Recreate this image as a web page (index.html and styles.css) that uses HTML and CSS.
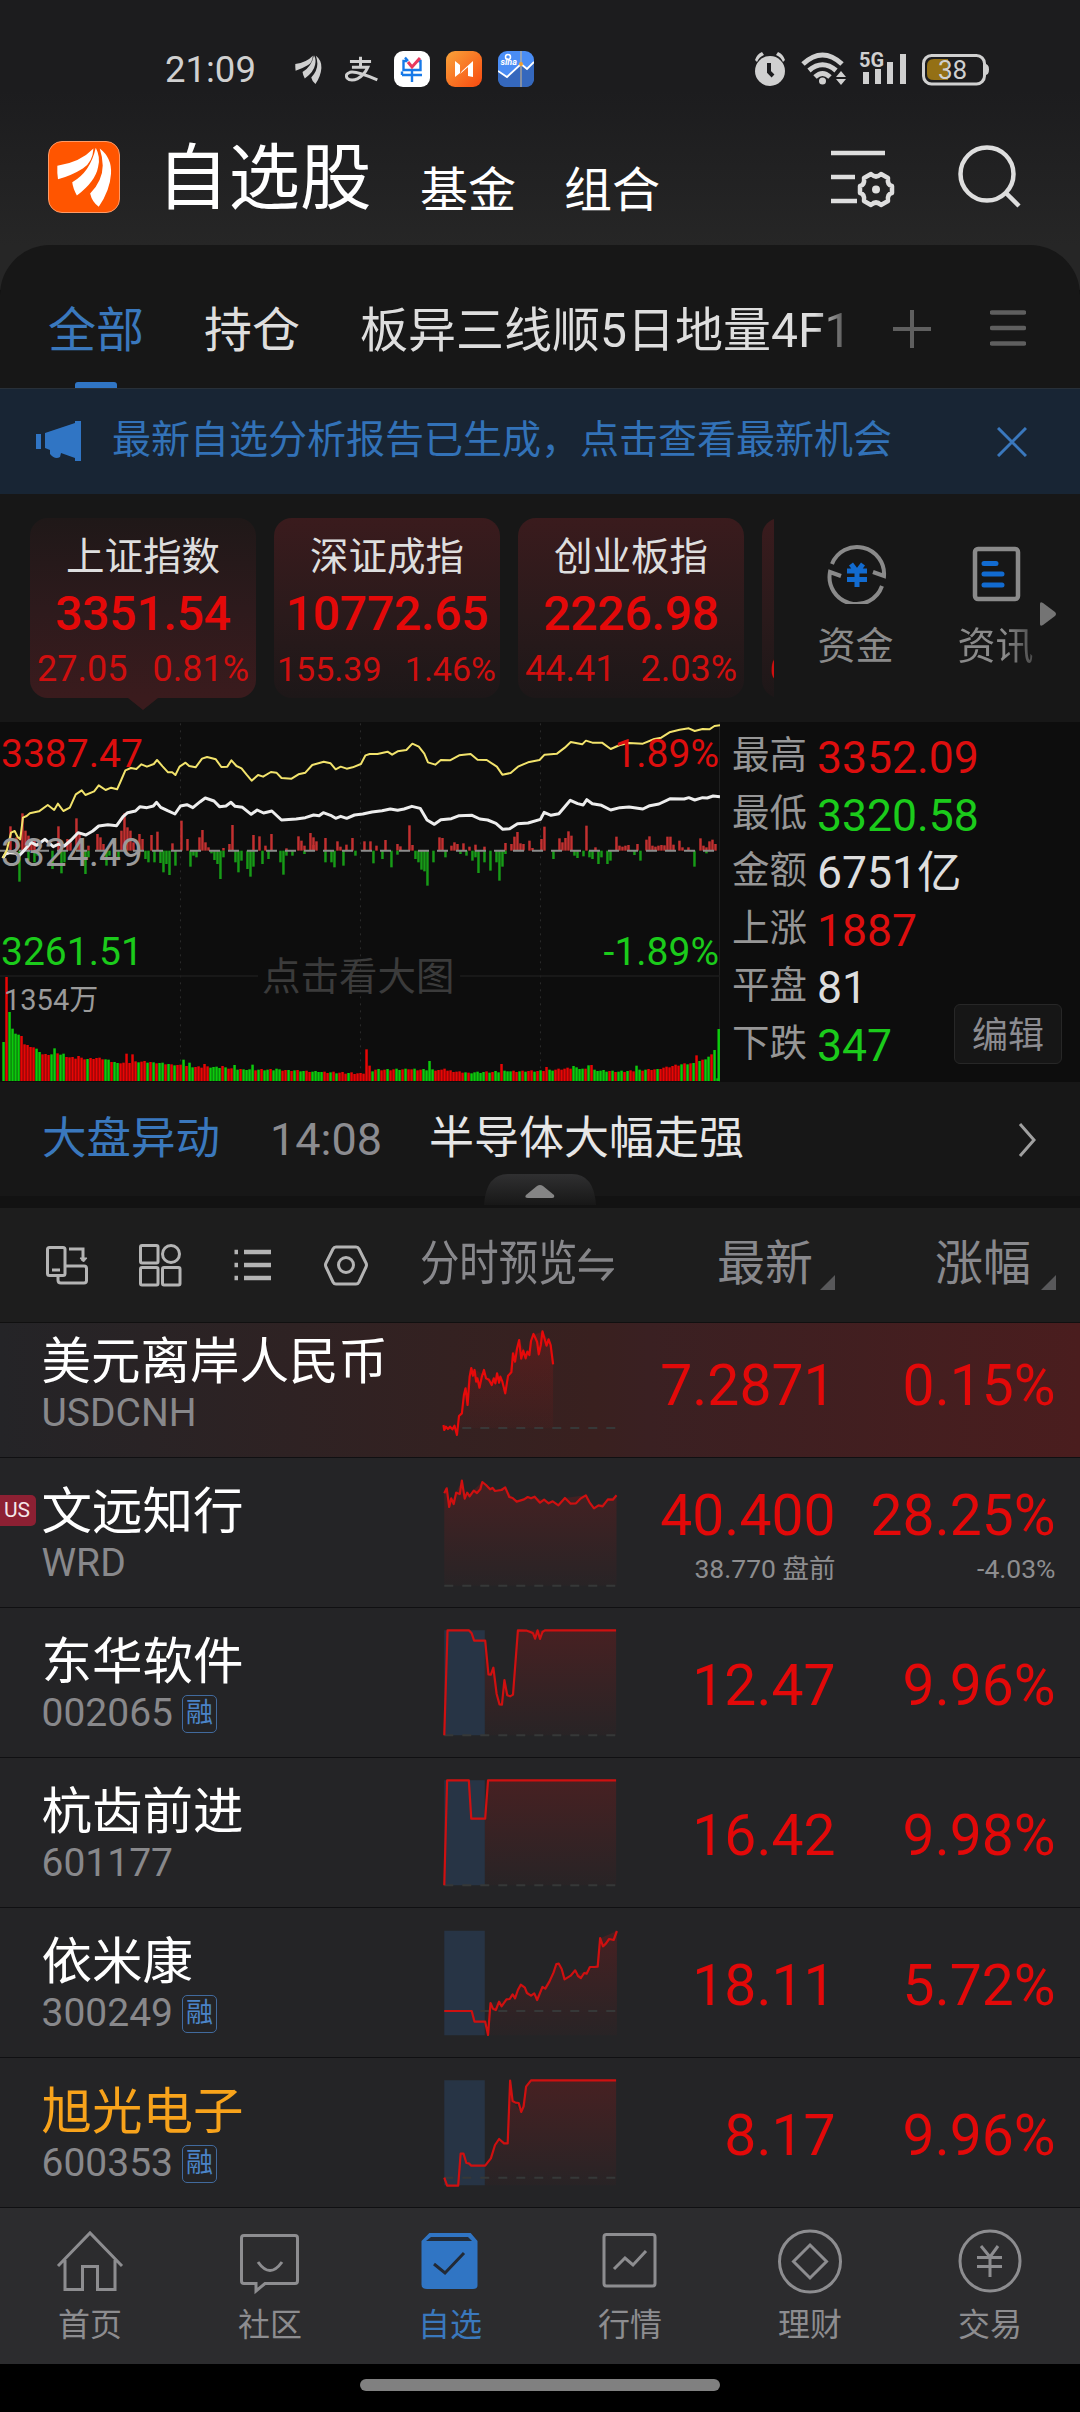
FILE: index.html
```html
<!DOCTYPE html>
<html lang="zh-CN">
<head>
<meta charset="utf-8">
<title>自选股</title>
<link rel="stylesheet" href="styles.css">
</head>
<body>
<svg class="defs" width="0" height="0">
  <defs>
    <linearGradient id="area" x1="0" y1="0" x2="0" y2="1"><stop offset="0" stop-color="#f01010" stop-opacity=".17"/><stop offset="1" stop-color="#f01010" stop-opacity=".02"/></linearGradient>
    <linearGradient id="orange" x1="0" y1="0" x2="1" y2="1"><stop offset="0" stop-color="#f9a33a"/><stop offset="1" stop-color="#f8490f"/></linearGradient>
    <linearGradient id="cap" x1="0" y1="0" x2="0" y2="1"><stop offset="0" stop-color="#303031"/><stop offset="1" stop-color="#171717"/></linearGradient>
    <symbol id="wing" viewBox="80 320 166 180"><path d="M81 376Q150 366 190 324Q188 366 158 384Q126 404 83 417Q80 398 81 376ZM126 426Q180 396 197 322Q212 350 204 380Q196 424 140 466Q128 444 126 426ZM209 324Q246 352 243 400Q240 450 206 500Q186 486 180 460Q218 420 218 375Q217 348 209 324Z" fill="currentColor"/></symbol>
  </defs>
</svg>
<div class="screen">
  <header class="top">
    <div class="status">
      <span class="clock">21:09</span>
      <svg class="st-wing"><use href="#wing"/></svg>
      <svg class="st-pay" viewBox="945 48 100 78" fill="none" stroke="#d0d0d0" stroke-width="9"><path d="M960 64H1024M992 50V82M966 82H1014Q1004 104 984 116Q962 126 951 114Q945 102 960 97Q978 92 1043 120"/></svg>
      <svg class="st-app" viewBox="0 0 36 36"><rect width="36" height="36" rx="9" fill="#fff"/><path d="M13 10H9.500v9h17v-9H23M8 24h20M8 20.500v3.500M11 6.500l3 3.500M18 19v12" fill="none" stroke="#1779e8" stroke-width="2.400"/><path d="M14 11l4 5 8-9" fill="none" stroke="#e8395e" stroke-width="3"/></svg>
      <svg class="st-app" viewBox="0 0 36 36"><rect width="36" height="36" rx="9" fill="url(#orange)"/><path d="M9 10l5 4v8l-5 4zM27 10v16l-5-1v-9l-8 7 2-3z" fill="#fff"/></svg>
      <svg class="st-app" viewBox="0 0 36 36"><rect width="36" height="36" rx="9" fill="#4a8df5"/><path d="M0 20l9 6 14-13 6 5 7-7v16q0 9-9 9H9q-9 0-9-9z" fill="#3568bd"/><path d="M0 20l9 6 14-13 6 5 7-7" fill="none" stroke="#fff" stroke-width="1.8"/><path d="M23 0v36" stroke="#d8b98a"/><circle cx="23" cy="13" r="2" fill="#f0a030"/><circle cx="10" cy="6" r="2.5" fill="none" stroke="#fff" stroke-width="1.5"/><text x="2.5" y="13.5" class="sina">sina</text></svg>
      <svg class="st-right" viewBox="750 48 242 42">
        <g fill="#d0d0d0"><circle cx="770" cy="71" r="15"/><path d="M755 60q2-6 7-8l2 3q-5 2-7 7zM785 60q-2-6-7-8l-2 3q5 2 7 7z"/><path d="M863 72h6v12h-6zM875 69h6v15h-6zM887 62h6v22h-6zM900 54h6v30h-6zM841 71l5 6h-10zM841 85l5-6h-10zM985 64q4 0 4 5.500t-4 5.500z"/><circle cx="822.500" cy="81" r="3.500"/></g>
        <path d="M769 63v9l4 4" fill="none" stroke="#1c1c1e" stroke-width="4"/>
        <g fill="none" stroke="#d0d0d0" stroke-width="5"><path d="M803 64Q822.500 46 842 64M809 70.500Q822.500 59 836 70.500M815 77Q822.500 70 830 77"/></g>
        <rect x="923.500" y="55.500" width="61" height="28.500" rx="8" fill="none" stroke="#d0d0d0" stroke-width="3"/>
        <path d="M948 59h-14q-7 0-7 7v8q0 6 7 6h14z" fill="#947015"/>
        <text x="859" y="67" class="g5">5G</text><text x="938" y="79" class="bat">38</text>
      </svg>
    </div>
    <div class="head">
      <div class="logo"><svg><use href="#wing"/></svg></div>
      <h1>自选股</h1>
      <span class="sec s1">基金</span><span class="sec s2">组合</span>
      <svg class="filter" viewBox="828 141 68 72" fill="none" stroke="#dedede" stroke-width="4.500"><path d="M831 153h54M831 177h24M831 201h26"/><path d="M871 174q5 5 10 0l7 4q-1 7 4 8v7q-5 1-4 8l-7 4q-5-5-10 0l-7-4q1-7-4-8v-7q5-1 4-8z" stroke-linejoin="round"/><circle cx="876" cy="189.500" r="2.500" fill="#dedede" stroke-width="3"/></svg>
      <svg class="search" viewBox="956 141 68 72" fill="none" stroke="#dedede" stroke-width="4.500"><circle cx="987" cy="174" r="26.500"/><path d="M1006 193l13 13"/></svg>
    </div>
  </header>
  <main>
    <nav class="tabs">
      <span class="tab on">全部</span><span class="tab">持仓</span><span class="tab long">板异三线顺5日地量4F1</span>
      <svg class="plus" viewBox="0 0 38 38"><path d="M19 0v38M0 19h38" stroke="#5f5f5f" stroke-width="4"/></svg>
      <svg class="burger" viewBox="0 0 36 36"><path d="M2 2.500h32M2 18h32M2 33.500h32" stroke="#5f5f5f" stroke-width="4.500" stroke-linecap="round"/></svg>
    </nav>
    <div class="notice">
      <svg class="horn" viewBox="36 421 46 42" fill="#3075c4"><path d="M36 434h5v15h-5zM45 433l30-10v-2h6v40h-6v-3l-14-5-1 4q-5 3-10-3v-4l-5-2z"/></svg>
      <span>最新自选分析报告已生成，点击查看最新机会</span>
      <svg class="close" viewBox="0 0 30 30"><path d="M1 1l28 28M29 1L1 29" stroke="#3a78bd" stroke-width="3"/></svg>
    </div>
    <section class="indices">
      <div class="cards">
        <div class="card sel"><b>上证指数</b><strong>3351.54</strong><p><i>27.05</i><i>0.81%</i></p></div>
        <div class="card"><b>深证成指</b><strong>10772.65</strong><p class="sm"><i>155.39</i><i>1.46%</i></p></div>
        <div class="card"><b>创业板指</b><strong>2226.98</strong><p><i>44.41</i><i>2.03%</i></p></div>
        <div class="card"><b></b><strong></strong><p><i>6</i></p></div>
      </div>
      <div class="tool t1"><svg viewBox="0 0 60 60" fill="none"><path d="M5 20A27 27 0 0 1 57 32L46 28M55 42A27 27 0 0 1 3 28L14 32" stroke="#8a8a8a" stroke-width="4"/><path d="M24 20l6 8 6-8M20 27h20M20 35.500h20M30 28v15" stroke="#126bd0" stroke-width="5"/></svg><span>资金</span></div>
      <div class="tool t2"><svg viewBox="0 0 60 60" fill="none"><rect x="8" y="5" width="43" height="50" rx="3" stroke="#8a8a8a" stroke-width="4.500"/><path d="M17 19.500h12M17 30h18M17 41h18" stroke="#126bd0" stroke-width="5" stroke-linecap="round"/></svg><span>资讯</span></div>
      <svg class="more" viewBox="0 0 16 24"><path d="M0 2q0-3 3-1l12 9q2 2 0 4L3 23q-3 2-3-1z" fill="#747474"/></svg>
    </section>
    <section class="market">
      <div class="chart">
        <svg id="plot" viewBox="0 36 1568 1080" preserveAspectRatio="none">
          <path d="M393 40V1113M785 40V1113M1177 40V1113" stroke="#2b2b2b" stroke-width="1" stroke-dasharray="2 5" vector-effect="non-scaling-stroke"/>
          <path d="M0 798H562M1002 798H1568" stroke="#1d1d1d" stroke-width="4"/>
          <g id="ticks"></g><g id="volume"></g>
          <path d="M0 422H1560" stroke="#8c8c8c" stroke-width="2" stroke-dasharray="11 8" vector-effect="non-scaling-stroke"/>
          <polyline class="line-white" points="6,445 12,432 22,428 35,430 41,438 50,425 68,397 80,406 98,388 116,410 128,402 140,408 155,390 170,368 187,375 202,363 215,348 235,344 254,347 268,320 278,308 295,303 305,290 320,293 334,288 341,277 350,292 365,302 381,312 393,288 407,284 420,293 436,275 447,264 466,273 478,290 492,288 503,277 512,289 528,292 547,313 560,300 574,309 592,303 613,330 645,327 665,323 683,315 695,317 704,308 720,316 731,325 742,319 755,325 772,315 790,312 810,306 832,302 850,297 866,301 880,297 897,289 915,295 930,330 946,343 960,329 983,326 1000,317 1028,316 1045,327 1062,330 1080,340 1095,358 1110,356 1127,341 1150,339 1177,328 1185,307 1200,316 1217,311 1230,290 1242,271 1258,281 1270,285 1278,269 1290,281 1310,286 1330,300 1350,293 1370,291 1400,297 1415,287 1435,282 1460,266 1490,267 1500,263 1513,270 1530,263 1540,264 1553,258 1568,260"/>
          <polyline class="line-yellow" points="6,444 15,420 24,368 32,363 38,380 44,388 50,323 58,318 65,310 85,304 104,285 118,300 126,281 138,303 152,293 165,253 178,241 186,255 205,244 215,226 230,240 242,233 255,238 264,210 273,181 285,174 297,177 308,163 320,170 335,162 342,150 354,169 366,187 375,187 382,195 391,170 404,158 412,168 426,172 440,146 451,141 470,148 482,171 495,170 504,151 515,168 526,175 537,194 548,212 562,195 573,200 590,186 602,188 613,204 635,206 650,193 665,188 680,165 705,155 720,160 731,178 742,170 755,176 768,172 786,162 796,136 805,132 822,132 844,125 854,134 866,124 885,120 898,101 912,110 924,131 932,157 948,164 960,150 980,151 1000,136 1025,132 1040,149 1060,150 1082,170 1094,194 1112,189 1128,170 1150,157 1175,150 1186,134 1213,131 1230,113 1243,96 1268,103 1276,92 1290,98 1311,98 1330,117 1350,105 1370,99 1400,101 1425,87 1440,83 1458,67 1480,59 1500,55 1513,63 1530,57 1545,58 1556,48 1568,46"/>
        </svg>
        <span class="lb up l1">3387.47</span><span class="lb up r1">1.89%</span>
        <span class="lb l2">3324.49</span>
        <span class="lb down l3">3261.51</span><span class="lb down r3">-1.89%</span>
        <span class="lb l4">1354万</span><span class="lb hint">点击看大图</span>
      </div>
      <dl class="stats">
        <dt>最高</dt><dd class="up">3352.09</dd>
        <dt>最低</dt><dd class="down">3320.58</dd>
        <dt>金额</dt><dd>6751亿</dd>
        <dt>上涨</dt><dd class="up">1887</dd>
        <dt>平盘</dt><dd>81</dd>
        <dt>下跌</dt><dd class="down">347</dd>
      </dl>
      <span class="edit">编辑</span>
    </section>
    <div class="news">
      <span class="kind">大盘异动</span><time>14:08</time><span class="title">半导体大幅走强</span>
      <svg class="chev" viewBox="0 0 18 34"><path d="M2 1l14 16L2 33" fill="none" stroke="#a0a0a0" stroke-width="3"/></svg>
      <svg class="handle" viewBox="484 1174 112 31"><path d="M484 1205Q486 1174 508 1174H572Q594 1174 596 1205Z" fill="url(#cap)"/><path d="M526 1195l11-9q3-2 6 0l11 9q1 3-2 3h-24q-4 0-2-3z" fill="#858585"/></svg>
    </div>
    <div class="cols">
      <svg class="tools" viewBox="40 1240 340 50" fill="none" stroke="#b4b4b4" stroke-width="3">
        <rect x="47.500" y="1247.500" width="17.500" height="28" rx="2"/><path d="M52 1270h8M69 1249h14v12M66 1266h18q2.500 0 2.500 2.500v12q0 2.500-2.500 2.500h-23q-3 0-3-3v-4"/><path d="M80 1258h7l-3.500 4z" fill="#b4b4b4" stroke-width="1"/>
        <rect x="140.500" y="1245.500" width="17.500" height="17.500" rx="1.500"/><circle cx="171" cy="1254" r="8.500"/><rect x="140.500" y="1267.500" width="17.500" height="17.500" rx="1.500"/><rect x="162.500" y="1267.500" width="17.500" height="17.500" rx="1.500"/>
        <path d="M244 1252h27M244 1265h27M244 1278h27M234.500 1252h3.500M234.500 1265h3.500M234.500 1278h3.500" stroke-width="4.500"/>
        <path d="M336 1247h20q2 0 3 2l7 14q1 2 0 4l-7 15q-1 2-3 2h-20q-2 0-3-2l-7-15q-1-2 0-4l7-14q1-2 3-2z"/><circle cx="346" cy="1265" r="7.500"/>
      </svg>
      <span class="preview">分时预览</span>
      <svg class="swap" viewBox="0 0 36 34" fill="none" stroke="#858588" stroke-width="3.500"><path d="M12 1L3 12H35M1 22H33L24 32"/></svg>
      <span class="c-last">最新</span><i class="tri"></i><span class="c-chg">涨幅</span><i class="tri"></i>
    </div>
    <section class="list">
      <article class="row first">
        <div class="name"><b>美元离岸人民币</b><small>USDCNH</small></div>
        <svg class="spark" viewBox="1080 -9 440 450" preserveAspectRatio="none"><path class="dash" d="M1088 354H1508"/><path class="area" d="M1090 354L1120 372L1140 240L1156 175L1200 205L1238 245L1256 130L1272 95L1290 135L1306 75L1328 65L1348 100L1354 163V354Z"/><polyline points="1086,345 1088,360 1092,350 1097,357 1102,350 1108,358 1113,347 1119,375 1124,318 1131,310 1136,255 1140,235 1145,285 1150,200 1154,174 1158,197 1162,180 1166,215 1169,205 1174,233 1180,199 1185,180 1190,205 1197,209 1204,225 1209,205 1213,220 1217,190 1222,218 1225,200 1230,215 1237,250 1244,197 1252,187 1256,130 1261,155 1266,115 1271,90 1276,146 1281,122 1287,145 1291,125 1296,135 1300,93 1306,72 1311,85 1315,96 1319,133 1324,105 1328,64 1334,90 1338,107 1343,88 1348,105 1354,163"/></svg>
        <div class="num last"><span>7.2871</span></div><div class="num chg"><span>0.15%</span></div>
      </article>
      <article class="row">
        <em class="us">US</em>
        <div class="name"><b>文远知行</b><small>WRD</small></div>
        <svg class="spark" viewBox="1080 441 440 450" preserveAspectRatio="none"><path class="area" d="M1088 550L1094 535L1100 590L1131 512L1138 565L1181 516L1210 542L1236 532L1262 574L1305 560L1366 585L1384 564L1434 556L1454 595L1509 556V827H1088Z"/><path class="dash" d="M1088 827H1508"/><polyline points="1088,550 1094,535 1100,591 1105,565 1111,582 1117,548 1126,552 1131,512 1138,566 1144,548 1150,559 1160,542 1168,549 1176,538 1181,516 1190,525 1200,538 1206,534 1212,543 1228,540 1237,532 1247,561 1255,564 1265,575 1283,568 1292,561 1300,565 1309,560 1322,578 1332,569 1343,580 1353,574 1367,586 1383,564 1397,581 1410,580 1422,565 1434,556 1443,577 1454,595 1465,586 1475,589 1488,568 1500,569 1509,556"/></svg>
        <div class="num last"><span>40.400</span><small>38.770 盘前</small></div><div class="num chg"><span>28.25%</span><small>-4.03%</small></div>
      </article>
      <article class="row">
        <div class="name"><b>东华软件</b><small>002065<u>融</u></small></div>
        <svg class="spark" viewBox="1080 891 440 450" preserveAspectRatio="none"><path class="area" d="M1187 992L1196 1094L1208 1075L1222 1184L1228 1184L1236 1110L1246 1158L1256 1155L1268 961H1508V1276H1187Z"/><path class="pre" d="M1088 961H1187V1276H1088Z"/><path class="dash" d="M1088 1276H1508"/><polyline points="1088,1276 1096,961 1148,961 1155,970 1161,992 1188,992 1196,1093 1202,1094 1208,1073 1216,1152 1223,1183 1229,1184 1235,1110 1242,1156 1249,1159 1256,1154 1268,961 1290,962 1300,967 1305,970 1310,986 1316,961 1322,987 1328,966 1334,961 1508,961"/></svg>
        <div class="num last"><span>12.47</span></div><div class="num chg"><span>9.96%</span></div>
      </article>
      <article class="row">
        <div class="name"><b>杭齿前进</b><small>601177</small></div>
        <svg class="spark" viewBox="1080 51 440 450" preserveAspectRatio="none"><path class="area" d="M1187 236L1194 121H1508V436H1187Z"/><path class="pre" d="M1088 121H1187V436H1088Z"/><path class="dash" d="M1088 436H1508"/><polyline points="1088,436 1095,121 1148,121 1154,236 1188,236 1195,121 1508,121"/></svg>
        <div class="num last"><span>16.42</span></div><div class="num chg"><span>9.98%</span></div>
      </article>
      <article class="row">
        <div class="name"><b>依米康</b><small>300249<u>融</u></small></div>
        <svg class="spark" viewBox="1080 501 440 450" preserveAspectRatio="none"><path class="area" d="M1187 850L1201 790L1260 775L1275 735L1315 780L1366 671L1382 718L1462 680L1470 595L1510 573V886H1187Z"/><path class="pre" d="M1088 572H1187V886H1088Z"/><path class="dash" d="M1088 813H1508"/><polyline points="1088,813 1155,813 1162,845 1188,845 1195,885 1201,789 1207,806 1214,810 1222,785 1228,799 1240,778 1248,777 1255,763 1261,775 1268,750 1275,734 1285,743 1290,759 1300,767 1308,760 1315,780 1328,741 1335,746 1345,725 1355,698 1362,672 1368,671 1375,687 1382,718 1397,707 1408,691 1415,708 1422,714 1430,699 1436,701 1444,681 1455,681 1463,680 1469,594 1476,619 1483,611 1491,597 1502,600 1510,573"/></svg>
        <div class="num last"><span>18.11</span></div><div class="num chg"><span>5.72%</span></div>
      </article>
      <article class="row hot">
        <div class="name"><b>旭光电子</b><small>600353<u>融</u></small></div>
        <svg class="spark" viewBox="1080 951 440 450" preserveAspectRatio="none"><path class="area" d="M1187 1276L1222 1198L1243 1210L1249 1022L1256 1086L1275 1115L1288 1040L1300 1021H1508V1336H1187Z"/><path class="pre" d="M1088 1021H1187V1336H1088Z"/><path class="dash" d="M1088 1313H1508"/><polyline points="1088,1313 1095,1337 1122,1337 1128,1241 1135,1241 1142,1269 1148,1270 1154,1277 1188,1277 1202,1255 1212,1215 1222,1197 1234,1210 1243,1210 1249,1022 1255,1083 1262,1088 1270,1089 1276,1116 1282,1099 1288,1040 1300,1021 1508,1021"/></svg>
        <div class="num last"><span>8.17</span></div><div class="num chg"><span>9.96%</span></div>
      </article>
    </section>
  </main>
  <footer class="bar">
    <a><svg viewBox="54 2225 72 72"><path d="M58 2266l32-33 32 33M65 2260v29.500h17.500v-23h15v23H115V2260"/></svg>首页</a>
    <a><svg viewBox="234 2225 72 72"><path d="M244 2235.500h51q2.500 0 2.500 2.500v43q0 2.500-2.500 2.500h-30l-9 7.500v-7.500h-12q-2.500 0-2.500-2.500v-43q0-2.500 2.500-2.500zM258 2262q12 17 24 0"/></svg>社区</a>
    <a class="on"><svg viewBox="414 2225 72 72"><path d="M430 2234.500h40l6 7v44q0 2-3 2h-46q-4 0-4-3v-43z" fill="#3075c4" stroke="#3075c4"/><path d="M431 2237h37l4 4h-46z" class="lid"/><path d="M434 2264l11 9 19-20" stroke="#222a36"/></svg>自选</a>
    <a><svg viewBox="594 2225 72 72"><rect x="604" y="2234.500" width="51" height="51.500" rx="2.500"/><path d="M614 2269l11-11 8 7 13-14"/></svg>行情</a>
    <a><svg viewBox="774 2225 72 72"><circle cx="810" cy="2261.500" r="30.500"/><path d="M810 2245l16.500 16.500-16.500 16.500-16.500-16.500z"/></svg>理财</a>
    <a><svg viewBox="954 2225 72 72"><circle cx="990" cy="2261" r="30"/><path d="M981 2246l9 11 8-11M977 2257.500h25M977 2266.500h25M990 2257v20"/></svg>交易</a>
  </footer>
  <div class="home"><i></i></div>
</div>
<script src="chart.js"></script>
</body>
</html>
```
FILE: chart.js
```js
// One bar per trading minute: 240 bars across a 1568-unit plot.
const PITCH = 1568 / 240;
const AXIS = 422;
const FLOOR = 1113;

const buys = "20:73 35:40 47:112 53:60 60:45 66:30 72:35 125:73 131:30 145:35 150:25 165:97 171:55 190:15 210:50 216:40 222:20 262:60 269:112 275:70 282:60 288:25 301:50 307:35 327:47 340:57 372:22 391:90 404:35 430:40 437:62 443:25 450:10 488:8 495:20 502:77 553:47 560:43 573:15 587:50 619:7 645:43 652:30 658:15 672:53 678:40 684:17 690:28 704:38 736:28 742:12 755:18 768:38 795:28 808:28 821:15 840:32 866:20 872:13 892:76 898:17 957:40 963:38 983:15 990:25 996:20 1010:22 1022:12 1036:18 1050:12 1100:23 1112:20 1119:42 1126:56 1132:22 1138:20 1152:30 1160:8 1178:35 1185:72 1217:37 1223:25 1230:38 1237:58 1243:45 1275:75 1295:10 1340:42 1347:15 1353:12 1360:15 1366:17 1385:20 1405:33 1411:43 1418:15 1425:12 1431:15 1437:17 1444:16 1450:42 1457:42 1463:18 1476:30 1482:10 1496:10 1522:37 1528:15 1535:10 1541:28 1548:33 1554:20";
const sells = "41:93 60:30 73:35 79:15 112:55 131:68 138:35 184:70 190:20 229:45 235:15 255:20 314:25 320:35 333:35 346:37 352:65 359:40 366:73 379:45 411:48 418:15 425:20 456:8 463:28 470:40 476:85 482:20 508:35 515:65 521:30 534:55 541:78 547:48 567:40 580:25 606:35 613:72 619:15 632:15 658:10 710:35 723:35 729:50 749:45 775:15 814:38 834:25 853:50 866:12 905:25 912:35 918:57 924:62 931:105 944:35 970:20 1003:10 1016:15 1029:30 1035:20 1041:67 1055:35 1068:60 1081:35 1087:90 1093:48 1100:10 1204:25 1249:15 1256:22 1269:17 1282:20 1288:25 1301:40 1308:20 1321:40 1328:30 1379:13 1392:30 1509:48 1535:8";

// Volume trend as [minute, height]; peaks override single minutes.
const trend = [[0,117],[3,157],[6,135],[8,108],[11,97],[13,80],[15,78],[18,83],[21,72],[28,66],[32,70],[38,54],[46,58],[50,56],[56,50],[64,42],[70,42],[80,35],[95,33],[105,27],[115,24],[120,22],[124,34],[135,35],[145,33],[155,25],[168,29],[180,30],[190,40],[196,33],[205,28],[218,36],[226,50],[230,54],[234,65],[236,80],[238,8],[239,156]];
const peaks = {1:312, 2:207, 4:142, 5:139, 7:110, 17:98, 20:82, 25:75, 41:82, 43:80, 60:64, 62:55, 67:51, 73:45, 77:48, 83:49, 91:37, 121:95, 122:46, 142:60, 147:37, 166:51, 181:42, 190:45, 195:47, 196:48, 211:46, 231:77, 237:93};
const colors = "grggggrrrrrggrrrggrggrrrrrrrgrrrrrggrggrrrrrrgrrgrgrggrgrgrrgrggrrrrrggggrgrrggrggggrgrggrgggrrgrgrggrrggggrrgrgrrrgrrrrrrrgrgrrgrrggrgrrgrrggggrrrrrrrrrrgrgggggrgrggrgggrrgrgrrgrgrrggrrrrrrggggrgrgggggrgrggrgrrggrgrrrgrrrrrrrgrgrgrgrggrggrrrg";

function bar(x, y, h, cls) {
  return `<rect x="${x.toFixed(1)}" y="${y}" width="5.4" height="${h}" class="${cls}"/>`;
}
function ticks(src, cls, up) {
  return src.split(" ").map(p => {
    const [x, h] = p.split(":").map(Number);
    return bar(Math.floor(x / PITCH + 0.3) * PITCH + 0.5, up ? AXIS - h : AXIS, h, cls);
  }).join("");
}
function volumeAt(i) {
  if (peaks[i]) return peaks[i];
  const k = trend.findIndex(p => p[0] >= i);
  if (trend[k][0] === i) return trend[k][1];
  const [a, va] = trend[k - 1], [b, vb] = trend[k];
  return Math.round(va + (vb - va) * (i - a) / (b - a)) + (i * 7 % 3 - 1) * 2;
}

document.getElementById("ticks").innerHTML = ticks(buys, "buy", true) + ticks(sells, "sell", false);
let out = "";
for (let i = 0; i < 240; i++) {
  const h = volumeAt(i);
  out += bar(i * PITCH + (i === 239 ? 1 : 5), FLOOR - h, h, colors[i] === "g" || i === 239 ? "vg" : "vr");
}
document.getElementById("volume").innerHTML = out;
```
FILE: styles.css
```css
* { box-sizing: border-box; margin: 0; padding: 0; }
body { width: 1080px; height: 2412px; overflow: hidden; background: #000; font-family: Roboto, "Noto Sans CJK SC", sans-serif; color: #dedede; }
i, em { font-style: normal; }
u { text-decoration: none; }
b, h1, strong { font-weight: 400; }
svg { display: block; flex: none; }
.defs { position: absolute; }
.screen { display: flex; flex-direction: column; height: 2412px; white-space: nowrap; }
.up { color: #dd0e0e; }
.down { color: #1bcb1b; }

.top { height: 290px; margin-bottom: -45px; background: linear-gradient(#1c1c1e 0, #1c1c1e 90px, #262626 245px); }
.status { height: 95px; padding: 43px 88px 0 165px; display: flex; align-items: center; }
.clock { width: 130px; padding-top: 1px; font-size: 36.500px; line-height: 52px; color: #d0d0d0; }
.st-wing { width: 27px; height: 29px; color: #d0d0d0; }
.st-pay { width: 33px; height: 26px; margin: 0 16px 0 23px; }
.st-app { width: 36px; height: 36px; margin-right: 16px; }
.st-right { width: 242px; height: 42px; margin-left: auto; }
.sina { font: italic 700 9px Roboto, sans-serif; fill: #fff; }
.g5 { font: 700 20px "Roboto", sans-serif; fill: #d0d0d0; }
.bat { font: 400 26px Roboto, sans-serif; fill: #d0d0d0; }
.head { height: 150px; padding: 14px 56px 0 48px; display: flex; align-items: center; }
.logo { width: 72px; height: 72px; border-radius: 14px; border: 1px solid #ff9a66; background: #ff5500; padding: 5px 0 0 8px; color: #fff; }
.logo svg { width: 55px; height: 60px; }
h1 { margin-left: 37px; padding-top: 3px; font-size: 71.500px; line-height: 100px; color: #fff; }
.sec { font-size: 48px; line-height: 60px; padding-top: 27px; color: #fff; }
.s1 { margin-left: 48.500px; }
.s2 { margin-left: 48px; }
.filter, .search { width: 68px; height: 72px; }
.filter { margin-left: auto; }
.search { margin-left: 60px; }

main { background: #171717; border-radius: 50px 50px 0 0; height: 1962px; }
.tabs { height: 143px; padding: 26px 54px 0 48px; display: flex; align-items: flex-start; }
.tab { font-size: 48px; height: 117px; line-height: 119px; position: relative; margin-right: 60px; }
.tab.on { color: #3a78bd; }
.tab.on::after { content: ""; position: absolute; left: 27px; bottom: 0; width: 42px; height: 6px; border-radius: 3px 3px 0 0; background: #3075c4; }
.tab.long { width: 488px; margin: 0 46px 0 0; overflow: hidden; mask-image: linear-gradient(90deg, #000 455px, rgba(0,0,0,.25) 487px); }
.plus { width: 38px; height: 38px; margin: 39px 59px 0 -1px; }
.burger { width: 36px; height: 36px; margin-top: 39px; }
.notice { height: 106px; padding: 0 53px 0 36px; display: flex; align-items: center; background: #182534; border-top: 1px solid #283039; color: #3272b8; font-size: 39px; }
.notice span { line-height: 60px; margin-bottom: 3px; }
.horn { width: 46px; height: 42px; margin-right: 30px; }
.close { width: 30px; height: 30px; margin-left: auto; }

.indices { height: 228px; padding: 24px 24px 0 30px; display: flex; }
.cards { width: 744px; height: 195px; display: flex; gap: 18px; overflow: hidden; }
.card { position: relative; flex: none; width: 226px; height: 180px; border-radius: 18px; padding-top: 12px; background: linear-gradient(#3a1b1d, #2a1a1b 55%, #1d1718); display: flex; flex-direction: column; align-items: center; }
.card.sel { background: linear-gradient(#1f1818, #2d1a1c 50%, #3a1b1d); }
.card.sel::after { content: ""; position: absolute; left: 98px; top: 180px; border: 15px solid transparent; border-top: 12px solid #3a1b1d; border-bottom: 0; }
.card b { height: 54px; font-size: 38.500px; line-height: 54px; }
.card strong { height: 58px; font-size: 48px; line-height: 60px; font-weight: 500; letter-spacing: -.2px; color: #e40909; }
.card p { width: 100%; height: 52px; padding: 0 7px; display: flex; justify-content: space-between; font-size: 36px; line-height: 54px; color: #cf0f0f; }
.card p.sm { font-size: 34px; padding: 0 4px 0 3px; }
.tool { width: 78px; padding-top: 26px; color: #8a8a8a; font-size: 38px; line-height: 50px; }
.tool svg { width: 60px; height: 60px; margin: 0 auto 17px; }
.t1 { margin-left: 43.500px; }
.t2 { margin-left: 62px; }
.t2 span { display: block; mask-image: linear-gradient(90deg, #000 60%, rgba(0,0,0,.4)); }
.more { width: 16px; height: 24px; margin: 84px 0 0 4.500px; }

.market { position: relative; height: 360px; display: flex; background: #0d0d0d; }
.chart { position: relative; width: 720px; height: 360px; border-right: 1px solid #1f1f1f; }
#plot { width: 720px; height: 360px; }
#plot polyline { fill: none; vector-effect: non-scaling-stroke; stroke-linejoin: round; }
.line-white { stroke: #ededed; stroke-width: 3; }
.line-yellow { stroke: #f2e36c; stroke-width: 2; }
.buy { fill: #c23030; }
.sell { fill: #179b17; }
.vr { fill: #e80505; }
.vg { fill: #0cca0c; }
.lb { position: absolute; font-size: 39px; line-height: 44px; }
.l1 { left: 1px; top: 10px; }
.r1 { right: 0; top: 10px; }
.l2 { left: 1px; top: 109px; color: #9a9a9a; }
.l3 { left: 1px; top: 208px; }
.r3 { right: 0; top: 208px; }
.l4 { left: 4px; top: 256px; font-size: 29px; color: #9a9a9a; }
.hint { left: 262px; top: 233px; font-size: 38.500px; color: #3b3b3b; }
.stats { padding: 6px 0 0 12px; display: grid; grid-template-columns: 85px auto; grid-auto-rows: 57.600px; }
.stats dt { font-size: 37.500px; line-height: 55px; color: #969696; }
.stats dd { font-size: 44.500px; line-height: 61px; }
.edit { position: absolute; left: 954px; top: 282px; width: 108px; height: 60px; border: 1px solid #272727; border-radius: 6px; background: #161616; text-align: center; font-size: 36px; line-height: 62px; color: #8b8b90; }

.news { position: relative; height: 126px; padding: 12px 44px 10px 42px; display: flex; align-items: center; border-bottom: 12px solid #121212; font-size: 45px; line-height: 60px; }
.kind { width: 228px; margin-bottom: 3px; font-size: 44.500px; color: #3a78bd; }
.news time { width: 159px; color: #8c8c90; }
.title { margin-bottom: 3px; color: #e6e6e6; }
.chev { width: 18px; height: 34px; margin-left: auto; }
.handle { position: absolute; left: 484px; top: 92px; width: 112px; height: 31px; }
.cols { height: 114px; padding: 0 24px 0 40px; display: flex; align-items: center; background: #1d1d1d; color: #88888c; font-size: 48px; line-height: 60px; }
.cols span { margin-bottom: 3px; }
.tools { width: 340px; height: 50px; }
.preview { width: 156px; margin-left: 40px; transform: scaleX(.82); transform-origin: 0 50%; }
.swap { width: 36px; height: 34px; margin-left: 2px; }
.c-last { margin-left: 103px; }
.c-chg { margin-left: 100px; }
.tri { border-left: 15px solid transparent; border-bottom: 15px solid #58585a; margin: 34px 0 0 7px; }
.tri:last-child { margin-left: 10px; }

.list { height: 885px; overflow: hidden; background: #242426; border-top: 1px solid #101010; }
.row { position: relative; height: 150px; border-top: 1px solid #101012; display: flex; }
.first { margin-top: -16px; background: linear-gradient(90deg, #242427, #39201f 55%, #3a2022 60%, #4a1d1e); }
.name { width: 399px; margin-left: 41.500px; padding-top: 24px; }
.name b { display: block; font-size: 50.500px; line-height: 60px; color: #fff; }
.first .name b { font-size: 49.500px; }
.hot .name b { color: #f8a31b; }
.name small { display: flex; align-items: center; font-size: 39px; line-height: 43px; color: #88888b; }
.name u { width: 35px; height: 38px; margin-left: 9px; border: 1.500px solid #416a9d; border-radius: 5px; font-size: 27px; line-height: 35px; text-align: center; color: #4b84c8; }
.us { position: absolute; left: 0; top: 37px; width: 36px; height: 31px; border-radius: 0 5px 5px 0; background: #8d2033; color: #f3e6e8; font-size: 21px; line-height: 31px; padding-left: 4px; }
.spark { width: 180px; height: 150px; margin-top: -1px; }
.spark polyline { fill: none; stroke: #cf1010; stroke-width: 2.200; vector-effect: non-scaling-stroke; stroke-linejoin: round; }
.first .spark polyline { stroke: #e60a0a; }
.area { fill: url(#area); }
.pre { fill: #273445; }
.dash { stroke: #363838; stroke-width: 2; stroke-dasharray: 9 9; vector-effect: non-scaling-stroke; }
.num { padding-top: 44px; text-align: right; display: flex; flex-direction: column; color: #e20909; font-size: 57px; line-height: 68px; }
.num:has(small) { padding-top: 24px; }
.last { width: 215px; }
.chg { width: 220px; }
.num small { font-size: 26.500px; line-height: 38px; color: #8d8d8f; }

.bar { height: 157px; padding-top: 17px; display: grid; grid-template-columns: repeat(6, 1fr); background: #2c2c2e; border-top: 1px solid #101012; }
.bar a { display: flex; flex-direction: column; align-items: center; color: #8d8d90; font-size: 32px; line-height: 57px; }
.bar svg { width: 72px; height: 72px; fill: none; stroke: #8d8d90; stroke-width: 3; }
.bar .on { color: #3a78bd; }
.bar .lid { fill: #232c38; stroke: none; }
.home { height: 48px; background: #000; display: flex; justify-content: center; padding-top: 15px; }
.home i { width: 360px; height: 12px; border-radius: 6px; background: #808080; }
```
